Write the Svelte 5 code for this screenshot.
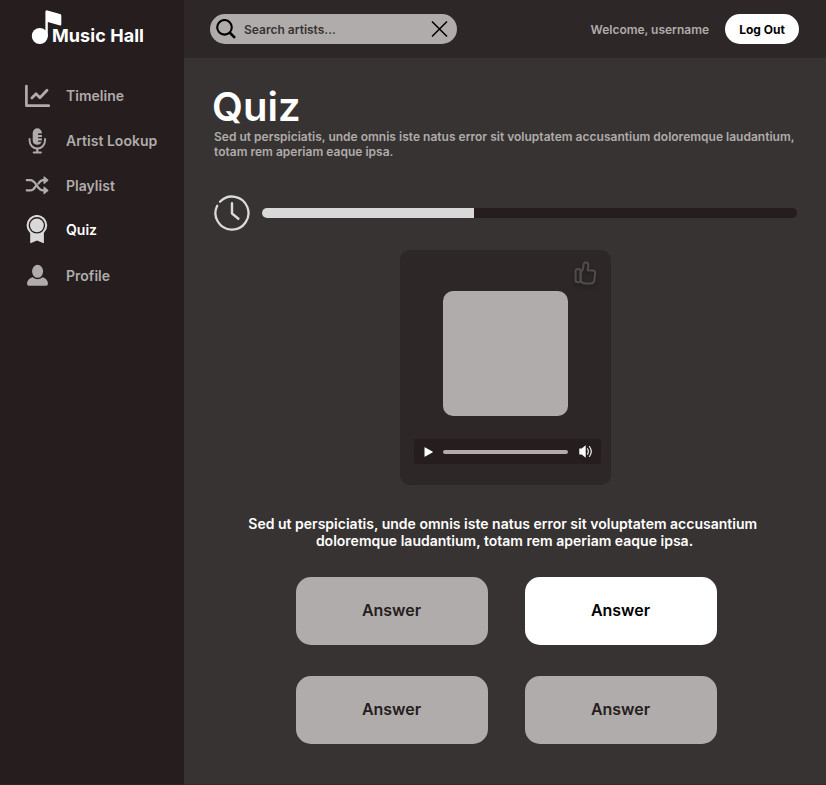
<script>
  const nav = ['Timeline', 'Artist Lookup', 'Playlist', 'Quiz', 'Profile'];
  const answers = ['Answer', 'Answer', 'Answer', 'Answer'];
  let active = $state('Quiz');
  let selected = $state(1);
  let query = $state('');
  const progress = 39.6;
</script>

<div class="app">
  <aside>
    <div class="brand">
      <svg width="32" height="36" viewBox="0 0 32 36" fill="#fff">
        <circle cx="8.8" cy="26" r="8" />
        <path d="M14.4 27V2q0-2.2 2-1.6L29 4q1.3.4 1.3 1.5V14.6q0 1.1-1.2.8L16.8 12V27z" />
      </svg>
      <span>Music Hall</span>
    </div>
    <nav>
      {#each nav as item}
        <button class="nav-item" class:active={item === active} onclick={() => (active = item)}>
          <svg width="26" height="30" viewBox="0 0 26 30" fill="none" stroke="currentColor" stroke-linecap="round" stroke-linejoin="round">
            {#if item === 'Timeline'}
              <path d="M2.4 5V24.7H24.7" stroke-width="2.7" />
              <path d="M7.9 16.9l4.1-4.1 3.9 3.9 7.1-7.4" stroke-width="2.8" />
            {:else if item === 'Artist Lookup'}
              <path d="M8.7 6.9a4.6 4.6 0 0 1 9.2 0v.7h-3.8v1.3h3.8V11h-3.8v1.3h3.8v2.1h-3.8v1.3h3.5a4.6 4.6 0 0 1-8.9-1.3z" fill="currentColor" stroke="none" />
              <path d="M5.6 13v1.8a7.7 7.7 0 0 0 15.4 0V13" stroke-width="1.9" />
              <path d="M13.3 22.8v3.6M9.8 26.5h7" stroke-width="2.2" />
            {:else if item === 'Playlist'}
              <path d="M2.8 9.2h3.4c6.6 0 6.4 10.2 13 10.2h3M2.8 19.4h3.4c2.6 0 4-1.7 5.1-3.7M14.5 12.5c1.1-1.8 2.5-3.3 4.7-3.3h3" stroke-width="2.3" />
              <path d="M20.1 6.1v6.2l3.7-3.1zM20.1 16.3v6.2l3.7-3.1z" fill="currentColor" stroke-width="1.3" />
            {:else if item === 'Quiz'}
              <path d="M6.2 18V27.5q0 1 .9.6L13 25.6l6 2.5q.9.4.9-.6V18z" fill="currentColor" stroke="none" />
              <circle cx="12.9" cy="10.3" r="9.3" fill="#251d1e" stroke-width="2.1" />
              <circle cx="12.9" cy="10.3" r="6.9" fill="currentColor" stroke="none" />
            {:else}
              <ellipse cx="13.6" cy="10.3" rx="5.5" ry="6.5" fill="currentColor" stroke="none" />
              <path d="M8.6 16.3q5 3.8 10 0c3.6 1 5.2 3.3 5.4 6.4q0 2-1.9 2H4.9q-1.9 0-1.9-2c.2-3.1 1.8-5.4 5.6-6.4z" fill="currentColor" stroke="none" />
            {/if}
          </svg>
          <span>{item}</span>
        </button>
      {/each}
    </nav>
  </aside>

  <div class="page">
    <header>
      <label class="search">
        <svg width="20" height="20" viewBox="0 0 20 20" fill="none" stroke="#000">
          <circle cx="8.5" cy="8.3" r="7.3" stroke-width="2.1" />
          <path d="M13.6 13.5l5.4 5.4" stroke-width="2.6" />
        </svg>
        <input bind:value={query} placeholder="Search artists..." />
        <svg width="17" height="16" viewBox="0 0 17 16" fill="none" stroke="#000" stroke-width="1.5">
          <path d="M1 .5l15 15M16 .5l-15 15" />
        </svg>
      </label>
      <span class="welcome">Welcome, username</span>
      <button class="logout">Log Out</button>
    </header>

    <main>
      <h1>Quiz</h1>
      <p class="intro">Sed ut perspiciatis, unde omnis iste natus error sit voluptatem accusantium doloremque laudantium,<br />totam rem aperiam eaque ipsa.</p>

      <div class="timer">
        <svg width="36" height="36" viewBox="0 0 36 36" fill="none" stroke="#d9dbd9" stroke-linecap="round" stroke-linejoin="round">
          <path d="M6 6.7A16.5 16.5 0 1 1 3.2 10.7" stroke-width="2.3" />
          <path d="M18 8.2V18.5l6.4 5.2" stroke-width="2.4" />
        </svg>
        <div class="track"><div class="fill" style:width="{progress}%"></div></div>
      </div>

      <section class="card">
        <svg class="like" width="23" height="24" viewBox="0 0 23 24" fill="none" stroke="#514c4c" stroke-width="2" stroke-linejoin="round">
          <rect x="1.6" y="7.9" width="5" height="13.4" rx="2.3" />
          <path d="M6.6 11.2C8.5 9.8 9.3 7.8 9.5 4c.1-3.8 4.9-3.2 4.8.2l-.6 5.1 5.1.2c1.9.1 2.5 1.2 2.3 2.9l-.8 6.9c-.3 2.1-1.4 3.1-3.5 3.1h-4.5c-3.5 0-5.7-.5-5.7-3.7z" />
        </svg>
        <div class="cover"></div>
        <div class="player">
          <svg width="9" height="10" viewBox="0 0 9 10" fill="#fff"><path d="M.5.8Q.5 0 1.3.4l7.1 4q.9.6 0 1.2l-7.1 4Q.5 10 .5 9.2z" /></svg>
          <div class="seek"></div>
          <svg width="14" height="13" viewBox="0 0 14 13" fill="none" stroke="#fff" stroke-width="1.1" stroke-linecap="round">
            <path d="M.3 3.4h2.4L6.7.3v12.4L2.7 9.6H.3z" fill="#fff" stroke="none" />
            <path d="M8.5 3.8q1.7 2.7 0 5.4M10.4 1.5q3.8 5 0 10" />
          </svg>
        </div>
      </section>

      <p class="question">Sed ut perspiciatis, unde omnis iste natus error sit voluptatem accusantium&nbsp;<br />doloremque laudantium, totam rem aperiam eaque ipsa.</p>

      <div class="answers">
        {#each answers as answer, i}
          <button class:selected={i === selected} onclick={() => (selected = i)}>{answer}</button>
        {/each}
      </div>
    </main>
  </div>
</div>

<style>
  :global(body) { background: #373332; }
  * { box-sizing: border-box; }
  .app { display: flex; width: 826px; height: 785px; overflow: hidden; font-family: Inter, sans-serif; background: #373332; }
  svg { flex: none; display: block; }
  button { border: 0; padding: 0; font: inherit; cursor: pointer; }
  aside { width: 184px; flex: none; background: #251d1e; border-bottom: 1px solid #2d2427; }
  .brand { display: flex; height: 46px; padding: 10px 0 0 31px; color: #fff; }
  .brand span { margin: 15px 0 0 -11px; font-size: 18px; line-height: 22px; font-weight: 700; letter-spacing: .06px; white-space: nowrap; }
  nav { display: flex; flex-direction: column; padding-top: 27px; }
  .nav-item { display: flex; align-items: center; height: 45px; gap: 16px; padding-left: 24px; background: none; color: #b0acab; font-size: 14px; font-weight: 600; letter-spacing: .02px; text-align: left; white-space: nowrap; }
  .nav-item.active { color: #fff; padding-bottom: 1px; }
  .nav-item.active svg { color: #d9d9d9; }
  .nav-item.active span { padding-bottom: 1px; }
  .page { flex: 1; min-width: 0; border-bottom: 1px solid #39292e; }
  header { display: flex; align-items: center; height: 58px; padding: 0 27px 0 26px; background: #2d2727; }
  .search { display: flex; align-items: center; width: 247px; height: 30px; padding: 0 9px 0 6px; border-radius: 15px; background: #b0acab; }
  .search input { flex: 1; min-width: 0; margin-left: 8px; padding: 0; border: 0; outline: 0; background: none; font: 600 12px Inter, sans-serif; color: #373332; }
  .search input::placeholder { color: #373332; opacity: 1; }
  .welcome { margin-left: auto; font-size: 12px; font-weight: 600; letter-spacing: -.02px; color: #b0acab; white-space: nowrap; }
  .logout { width: 74px; height: 30px; margin-left: 16px; border-radius: 15px; background: #fff; color: #000; font-size: 12px; font-weight: 700; }
  main { display: flex; flex-direction: column; padding: 25px 29px 0 30px; }
  h1 { margin: 0 0 0 -2px; height: 46px; font-size: 40px; line-height: 48px; font-weight: 600; color: #fff; }
  .intro { margin: 0; font-size: 12px; line-height: 15px; font-weight: 600; letter-spacing: .01px; color: #b0acab; white-space: nowrap; }
  .timer { display: flex; align-items: center; gap: 12px; margin-top: 36px; }
  .track { flex: 1; height: 10px; border-radius: 5px; overflow: hidden; background: #251d1e; }
  .fill { height: 100%; background: #d9d9d9; }
  .card { display: flex; flex-direction: column; width: 211px; height: 235px; margin: 19px 0 0 186px; padding: 11px 10px 0 14px; border-radius: 10px; background: #2d2727; }
  .like { align-self: flex-end; margin-right: 4px; filter: drop-shadow(0 3px 2px rgba(0, 0, 0, .25)); }
  .cover { width: 125px; height: 125px; margin: 6px 0 0 29px; border-radius: 10px; background: #b0acab; }
  .player { display: flex; align-items: center; height: 25px; margin-top: 23px; padding: 0 8px 0 10px; border-radius: 2px; background: #251d1e; }
  .seek { width: 125px; height: 4px; margin: 0 11px 0 10px; border-radius: 2px; background: #b0acab; }
  .question { margin: 30px 0 0 -2px; font-size: 14px; line-height: 17px; font-weight: 600; letter-spacing: .01px; color: #fff; text-align: center; white-space: nowrap; }
  .answers { display: grid; grid-template-columns: 192px 192px; gap: 31px 37px; margin: 28px 0 0 82px; }
  .answers button { height: 68px; padding: 0 1px 2px 0; border-radius: 15px; background: #b0acab; color: #251d1e; font-size: 16px; font-weight: 600; }
  .answers button.selected { background: #fff; color: #000; }
</style>
